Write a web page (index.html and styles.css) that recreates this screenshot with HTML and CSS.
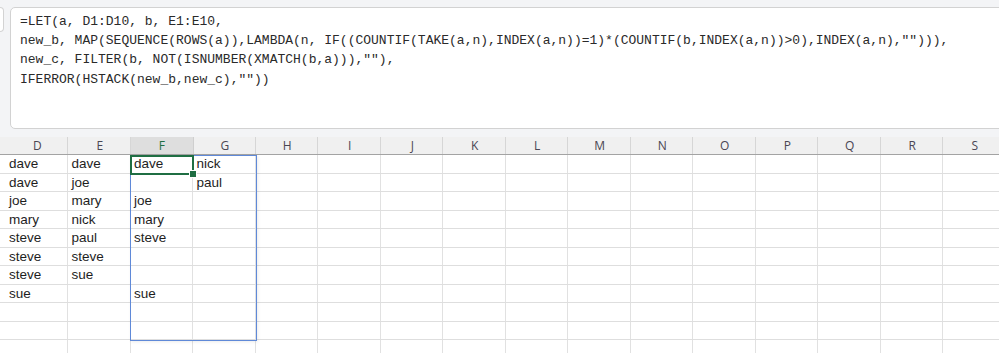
FILE: index.html
```html
<!DOCTYPE html>
<html>
<head>
<meta charset="utf-8">
<title>LET formula - sheet</title>
<link rel="stylesheet" href="styles.css">
</head>
<body>
<div class="topbar">
    <div class="namebox"></div>
    <div class="formula">=LET(a, D1:D10, b, E1:E10,
new_b, MAP(SEQUENCE(ROWS(a)),LAMBDA(n, IF((COUNTIF(TAKE(a,n),INDEX(a,n))=1)*(COUNTIF(b,INDEX(a,n))&gt;0),INDEX(a,n),""))),
new_c, FILTER(b, NOT(ISNUMBER(XMATCH(b,a))),""),
IFERROR(HSTACK(new_b,new_c),""))</div>
</div>

<div class="sheet">
    <div class="row hdr">
        <div></div><div>D</div><div>E</div><div class="active">F</div><div>G</div><div>H</div><div>I</div><div>J</div><div>K</div><div>L</div><div>M</div><div>N</div><div>O</div><div>P</div><div>Q</div><div>R</div><div>S</div>
    </div>
    <div class="row"><div></div><div>dave</div><div>dave</div><div>dave</div><div>nick</div></div>
    <div class="row"><div></div><div>dave</div><div>joe</div><div></div><div>paul</div></div>
    <div class="row"><div></div><div>joe</div><div>mary</div><div>joe</div><div></div></div>
    <div class="row"><div></div><div>mary</div><div>nick</div><div>mary</div><div></div></div>
    <div class="row"><div></div><div>steve</div><div>paul</div><div>steve</div><div></div></div>
    <div class="row"><div></div><div>steve</div><div>steve</div><div></div><div></div></div>
    <div class="row"><div></div><div>steve</div><div>sue</div><div></div><div></div></div>
    <div class="row"><div></div><div>sue</div><div></div><div>sue</div><div></div></div>
    <div class="row"></div>
    <div class="row"></div>
    <div class="row"></div>

    <!-- spill range F1:G10 and active cell F1 -->
    <div class="spill"></div>
    <div class="selected"><span class="handle"></span></div>
</div>
</body>
</html>
```

FILE: styles.css
```css
body, html {
    margin: 0;
    padding: 0;
    height: 353px;
    overflow: hidden;
    background: #fff;
}
.topbar {
    background-color: #f3f4f6;
    display: flex;
    align-items: flex-start;
    gap: 6px;
    padding: 7px 0 8px 0;
}
.namebox {
    width: 3px;
    height: 23px;
    background: #fff;
    border: 1px solid #d3d3d3;
    border-left: none;
    border-radius: 0 4px 4px 0;
}
.formula {
    flex: 1;
    height: 122px;
    box-sizing: border-box;
    margin-right: -10px;
    padding: 4px 9px;
    background: #fff;
    border: 1px solid #d2d2d2;
    border-radius: 5px;
    font-family: "Liberation Mono", "DejaVu Sans Mono", monospace;
    font-size: 13px;
    line-height: 19.2px;
    color: #2a2a2a;
    white-space: pre;
    overflow: hidden;
}
.sheet {
    position: relative;
    font-family: "Liberation Sans", Arial, sans-serif;
    font-size: 13.5px;
    color: #1e1e1e;
}
.row {
    display: grid;
    grid-template-columns: 6px repeat(16, 62.5px);
    height: 18.5px;
    box-sizing: border-box;
    border-bottom: 1px solid #dedede;
    background-image: repeating-linear-gradient(to right, transparent 0 61.5px, #e1e1e1 61.5px 62.5px);
    background-position: 6px 0;
    line-height: 17.5px;
    white-space: nowrap;
}
.row div {
    padding-left: 3px;
    overflow: hidden;
}
.row div:first-child {
    padding-left: 0;
}
.hdr {
    height: 18px;
    background-color: #f0f0f0;
    background-image: repeating-linear-gradient(to right, transparent 0 61.5px, #d6d6d6 61.5px 62.5px);
    border-bottom: 1px solid #a3a3a3;
    font-family: "Open Sans", "Noto Sans", sans-serif;
    font-size: 12px;
    color: #4a4653;
    line-height: 17px;
}
.hdr div {
    text-align: center;
    padding-left: 0;
}
.hdr .active {
    background: #dedede;
    color: #1f6e43;
    border-right: 1px solid #cfcfcf;
}
.spill {
    position: absolute;
    left: 130px;
    top: 18px;
    width: 126.5px;
    height: 185.5px;
    box-sizing: border-box;
    border: 1.5px solid #5f89d8;
    box-shadow: 1px 1px 3px rgba(0, 0, 0, 0.08);
}
.selected {
    position: absolute;
    left: 130px;
    top: 17.5px;
    width: 64px;
    height: 20px;
    box-sizing: border-box;
    border: 2px solid #1f6e43;
}
.handle {
    position: absolute;
    right: -5px;
    bottom: -5px;
    width: 6px;
    height: 6px;
    background: #1f6e43;
    border: 1px solid #fff;
}
```
